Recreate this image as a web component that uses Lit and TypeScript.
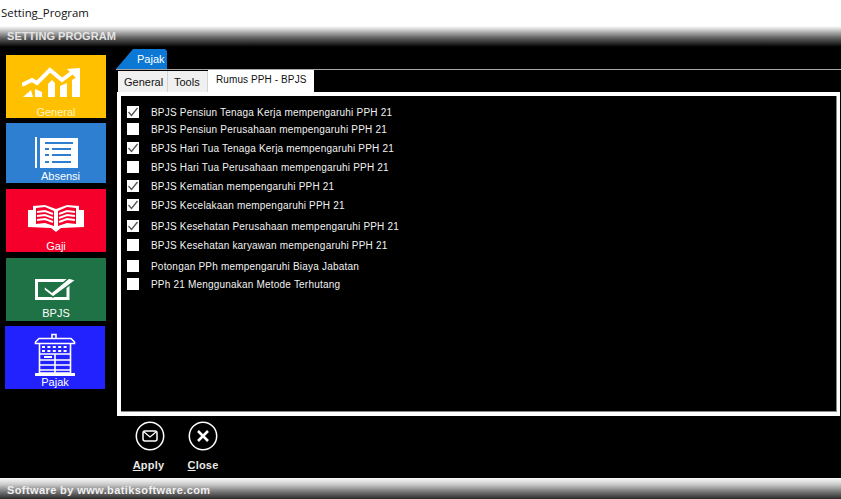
import { LitElement, html, css, svg } from "lit";
import { customElement } from "lit/decorators.js";

const ITEMS: [string, boolean][] = [
  ["BPJS Pensiun Tenaga Kerja mempengaruhi PPH 21", true],
  ["BPJS Pensiun Perusahaan mempengaruhi PPH 21", false],
  ["BPJS Hari Tua Tenaga Kerja mempengaruhi PPH 21", true],
  ["BPJS Hari Tua Perusahaan mempengaruhi PPH 21", false],
  ["BPJS Kematian mempengaruhi PPH 21", true],
  ["BPJS Kecelakaan mempengaruhi PPH 21", true],
  ["BPJS Kesehatan Perusahaan mempengaruhi PPH 21", true],
  ["BPJS Kesehatan karyawan mempengaruhi PPH 21", false],
  ["Potongan PPh mempengaruhi Biaya Jabatan", false],
  ["PPh 21 Menggunakan Metode Terhutang", false],
];

const generalIcon = html`<svg class="ic ic-general" width="58" height="30" viewBox="0 0 58 30">
  <path d="M0 18 10 13 15 16 28 3 40 13 52 4" fill="none" stroke="#fff" stroke-width="4"/>
  <path d="M45 2 58 1V15Z" fill="#fff"/>
  <path d="M1 30 9 23 11 30ZM13 30V22L20 25V30ZM26 30V17L30 13 33 16V30ZM38 30V19L45 16V30ZM50 30V13L58 8V30Z" fill="#fff"/>
</svg>`;

const absensiIcon = html`<svg class="ic ic-absensi" width="43" height="31" viewBox="0 0 43 31">
  <rect x="0" y="0" width="2" height="31" fill="#fff"/>
  <path d="M5 1H43V31H5Z" fill="#fff"/>
  <g fill="#2e7fd1">
    <rect x="10" y="5" width="28" height="2"/>
    <rect x="10" y="11" width="4" height="2"/>
    <rect x="17" y="11" width="19" height="2"/>
    <rect x="10" y="17" width="4" height="2"/>
    <rect x="17" y="17" width="19" height="2"/>
    <rect x="10" y="24" width="4" height="2"/>
    <rect x="17" y="24" width="19" height="2"/>
  </g>
</svg>`;

const gajiIcon = html`<svg class="ic ic-gaji" width="56" height="27" viewBox="0 0 56 27">
  <path d="M0 5H5V1L17 0 28 4 39 0 51 1V5H56V22L33 23 28 27 23 23 0 22Z" fill="#fff"/>
  <path d="M8 3 17 2 26 6V21L17 18 8 19ZM48 3 39 2 30 6V21L39 18 48 19Z" fill="#f4002b"/>
  <g stroke="#fff" stroke-width="2" fill="none">
    <path d="M9 7 17 6 25 9M9 11 17 10 25 13M9 15 17 14 25 17"/>
    <path d="M47 7 39 6 31 9M47 11 39 10 31 13M47 15 39 14 31 17"/>
  </g>
</svg>`;

const bpjsIcon = html`<svg class="ic ic-bpjs" width="42" height="23" viewBox="0 0 42 23">
  <path d="M1.500 3.500H33V21.500H1.500Z" fill="none" stroke="#fff" stroke-width="3"/>
  <path d="M9 9 17 15 34 1 41 3 18 20 9 13Z" fill="#fff" stroke="#1f7246" stroke-width="1.500"/>
</svg>`;

const pajakIcon = html`<svg class="ic ic-pajak" width="42" height="43" viewBox="0 0 42 43">
  <g fill="none" stroke="#fff" stroke-width="1.600">
    <path d="M18 5V1.500H22V5"/>
    <path d="M5 5.500H37L40.500 9V10.500H1.500V9Z"/>
    <path d="M5.500 11V40H36.500V11"/>
    <path d="M5.500 21H36.500M5.500 27H36.500M5.500 32H36.500M5.500 37H36.500M21 21V40"/>
  </g>
  <rect x="1" y="40" width="40" height="3" fill="#fff"/>
  <g fill="#fff">
    ${[0, 1, 2, 3, 4].map(
      (i) => svg`<rect x="${8 + i * 5.4}" y="13" width="3" height="2"/><rect x="${8 + i * 5.4}" y="17" width="3" height="2"/>`
    )}
    <rect x="10" y="23" width="8" height="2"/>
  </g>
</svg>`;

@customElement("app-root")
export class AppRoot extends LitElement {
  static styles = css`
    :host {
      display: block;
      width: 841px;
      height: 499px;
      overflow: hidden;
      background: #000;
      font-family: "Liberation Sans", Arial, sans-serif;
    }
    .page { display: flex; flex-direction: column; height: 499px; }
    .titlebar {
      height: 26px;
      flex: none;
      background: #fff;
      color: #111;
      font: 11.400px/25px "Open Sans", "Liberation Sans", sans-serif;
      padding-left: 1px;
    }
    .header {
      height: 21px;
      flex: none;
      background: linear-gradient(#fff 0%, #bbb 25%, #666 55%, #000 100%);
      color: #e4e4e4;
      font-weight: 700;
      font-size: 11px;
      line-height: 20px;
      padding-left: 7px;
      letter-spacing: 0.05px;
    }
    .main { flex: 1; display: flex; min-height: 0; }
    .nav {
      width: 116px;
      flex: none;
      display: flex;
      flex-direction: column;
      padding: 8px 0 0 6px;
      box-sizing: border-box;
    }
    .tile {
      width: 100px;
      height: 63px;
      flex: none;
      display: flex;
      flex-direction: column;
      align-items: center;
      color: #fff;
      font-size: 11px;
      line-height: 13px;
      overflow: hidden;
    }
    .ic { display: block; flex: none; }
    .general { background: #ffc000; margin-bottom: 5px; color: #fff3c0; }
    .absensi { background: #2e7fd1; height: 60px; margin-bottom: 6px; padding-top: 14px; box-sizing: border-box; }
    .gaji { background: #f4002b; margin-bottom: 6px; }
    .bpjs { background: #1f7246; margin-bottom: 5px; }
    .pajak { background: #2222ff; margin-left: -1px; }
    .ic-general { margin: 12px 0 9px -10px; }
    .ic-absensi { margin: 0 0 2px 0; }
    .absensi .lbl { margin-left: 9px; }
    .ic-gaji { margin: 16px 0 8px -1px; }
    .ic-bpjs { margin: 19px 0 7px -1px; }
    .ic-pajak { margin: 7px 0 0 -1px; }
    .content { flex: 1; display: flex; flex-direction: column; min-width: 0; padding-top: 2px; }
    .outer-tabs { height: 20px; flex: none; border-bottom: 1px solid #a8a8a8; }
    .outer-tab {
      width: 51px;
      height: 20px;
      box-sizing: border-box;
      background: #0a78d4;
      color: #fff;
      font-size: 11px;
      line-height: 21px;
      padding-left: 21px;
      clip-path: polygon(0 100%, 17px 0, 49px 0, 51px 2px, 51px 100%);
    }
    .inner-tabs {
      height: 22px;
      flex: none;
      display: flex;
      align-items: flex-end;
      padding-left: 2px;
    }
    .inner-tab {
      height: 21px;
      box-sizing: border-box;
      background: #f0f0f0;
      border-right: 1px solid #d4d4d4;
      color: #111;
      font-size: 11px;
      line-height: 22px;
      padding-left: 6px;
      white-space: nowrap;
    }
    .t-general { width: 50px; }
    .t-tools { width: 40px; }
    .t-active {
      width: 106px;
      height: 22px;
      background: #fff;
      border: 0;
      padding-left: 8px;
      font-size: 10px;
      letter-spacing: 0.100px;
      line-height: 20px;
    }
    .panel {
      height: 324px;
      flex: none;
      margin-left: 1px;
      margin-right: 1px;
      box-sizing: border-box;
      border: 4px solid #fff;
      border-right-width: 3px;
      background: #000;
      box-shadow: inset -1px -1px 0 #8a8a8a;
      padding: 9px 0 0 6px;
      display: grid;
      grid-template-rows: 17px 19px 19px 19px 19px 21px 19px 21px 18px 14px;
    }
    .row {
      display: flex;
      align-items: center;
      height: 14px;
      color: #f2f2f2;
      font-size: 10px;
      letter-spacing: 0.200px;
      white-space: nowrap;
    }
    .box {
      width: 12px;
      height: 12px;
      background: #fff;
      flex: none;
      margin-right: 12px;
      display: flex;
    }
    .actions { display: flex; padding: 5px 0 0 18px; flex: none; }
    .action {
      display: flex;
      flex-direction: column;
      align-items: center;
      color: #e8e8e8;
      font-size: 11px;
      font-weight: 700;
      letter-spacing: 0.200px;
      width: 32px;
      line-height: 13px;
    }
    .action svg { display: block; margin-bottom: 8px; }
    .action + .action { margin-left: 21px; }
    .apply-label { margin-left: -3px; }
    u { text-decoration: underline; }
    .footer {
      height: 21px;
      flex: none;
      background: linear-gradient(#fafafa 0%, #ccc 30%, #777 65%, #2a2a2a 100%);
      color: #f0f0f0;
      font-weight: 700;
      font-size: 11px;
      line-height: 24px;
      padding-left: 7px;
      letter-spacing: 0.4px;
    }
  `;

  render() {
    return html`<div class="page">
      <div class="titlebar">Setting_Program</div>
      <div class="header">SETTING PROGRAM</div>
      <div class="main">
        <nav class="nav">
          <div class="tile general">${generalIcon}<span class="lbl">General</span></div>
          <div class="tile absensi">${absensiIcon}<span class="lbl">Absensi</span></div>
          <div class="tile gaji">${gajiIcon}<span class="lbl">Gaji</span></div>
          <div class="tile bpjs">${bpjsIcon}<span class="lbl">BPJS</span></div>
          <div class="tile pajak">${pajakIcon}<span class="lbl">Pajak</span></div>
        </nav>
        <div class="content">
          <div class="outer-tabs"><div class="outer-tab">Pajak</div></div>
          <div class="inner-tabs">
            <div class="inner-tab t-general">General</div>
            <div class="inner-tab t-tools">Tools</div>
            <div class="inner-tab t-active">Rumus PPH - BPJS</div>
          </div>
          <div class="panel">
            ${ITEMS.map(
              ([label, on]) => html`<div class="row">
                <span class="box">${on
                  ? html`<svg width="12" height="12" viewBox="0 0 12 12"><path d="M1.500 6 4.500 9.500 10.500 2" fill="none" stroke="#555" stroke-width="1.300"/></svg>`
                  : ""}</span>
                <span>${label}</span>
              </div>`
            )}
          </div>
          <div class="actions">
            <div class="action">
              <svg width="30" height="30" viewBox="0 0 30 30">
                <circle cx="15" cy="15" r="13.700" fill="none" stroke="#fff" stroke-width="1.500"/>
                <rect x="8" y="10" width="14" height="10" rx="2" fill="none" stroke="#fff" stroke-width="1.500"/>
                <path d="M9 11 15 16 21 11" fill="none" stroke="#fff" stroke-width="1.300"/>
              </svg>
              <span class="apply-label"><u>A</u>pply</span>
            </div>
            <div class="action">
              <svg width="30" height="30" viewBox="0 0 30 30">
                <circle cx="15" cy="15" r="13.700" fill="none" stroke="#fff" stroke-width="1.500"/>
                <path d="M10 10 20 20M20 10 10 20" fill="none" stroke="#fff" stroke-width="2.600"/>
              </svg>
              <span><u>C</u>lose</span>
            </div>
          </div>
        </div>
      </div>
      <div class="footer">Software by www.batiksoftware.com</div>
    </div>`;
  }
}
